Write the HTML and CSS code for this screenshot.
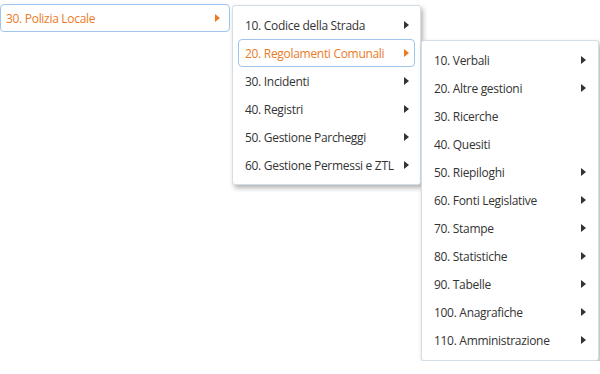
FILE: index.html
```html
<!DOCTYPE html>
<html lang="it">
<head>
    <meta charset="UTF-8">
    <title>Menu Polizia Locale</title>
    <link rel="stylesheet" href="styles.css">
</head>
<body>
    <div class="menubar">
        <ul class="menu menu-root">
            <li class="item active"><span>30. Polizia Locale</span><i class="arrow"></i></li>
        </ul>
        <ul class="menu panel panel-2">
            <li class="item"><span>10. Codice della Strada</span><i class="arrow"></i></li>
            <li class="item active"><span>20. Regolamenti Comunali</span><i class="arrow"></i></li>
            <li class="item"><span>30. Incidenti</span><i class="arrow"></i></li>
            <li class="item"><span>40. Registri</span><i class="arrow"></i></li>
            <li class="item"><span>50. Gestione Parcheggi</span><i class="arrow"></i></li>
            <li class="item"><span>60. Gestione Permessi e ZTL</span><i class="arrow"></i></li>
        </ul>
        <ul class="menu panel panel-3">
            <li class="item"><span>10. Verbali</span><i class="arrow"></i></li>
            <li class="item"><span>20. Altre gestioni</span><i class="arrow"></i></li>
            <li class="item"><span>30. Ricerche</span></li>
            <li class="item"><span>40. Quesiti</span></li>
            <li class="item"><span>50. Riepiloghi</span><i class="arrow"></i></li>
            <li class="item"><span>60. Fonti Legislative</span><i class="arrow"></i></li>
            <li class="item"><span>70. Stampe</span><i class="arrow"></i></li>
            <li class="item"><span>80. Statistiche</span><i class="arrow"></i></li>
            <li class="item"><span>90. Tabelle</span><i class="arrow"></i></li>
            <li class="item"><span>100. Anagrafiche</span><i class="arrow"></i></li>
            <li class="item"><span>110. Amministrazione</span><i class="arrow"></i></li>
        </ul>
    </div>
</body>
</html>
```

FILE: styles.css
```css
:root {
    --text-color: #333333;
    --active-color: #ec7a25;
    --active-border: #9fc6ea;
    --panel-border: #d3dde6;
}
body {
    margin: 0;
    background: #ffffff;
    font-family: "Open Sans", Arial, sans-serif;
    font-size: 12px;
    letter-spacing: -0.3px;
    color: var(--text-color);
}
.menubar {
    display: flex;
    align-items: flex-start;
}
.menu {
    list-style: none;
    margin: 0;
    padding: 0;
}
.item {
    display: flex;
    align-items: center;
    justify-content: space-between;
    height: 26px;
    padding: 0 8px 0 5px;
    border: 1px solid transparent;
    border-radius: 4px;
    white-space: nowrap;
}
.item.active {
    color: var(--active-color);
    border-color: var(--active-border);
}
.arrow {
    flex-shrink: 0;
    width: 0;
    height: 0;
    border-top: 4px solid transparent;
    border-bottom: 4px solid transparent;
    border-left: 5px solid var(--text-color);
}
.item.active .arrow {
    border-left-color: var(--active-color);
}
.menu-root {
    width: 230px;
    margin-top: 4px;
}
.menu-root .item {
    padding-right: 9px;
}
.panel {
    background: #ffffff;
    border: 1px solid var(--panel-border);
    border-radius: 3px;
    box-shadow: 2px 3px 5px rgba(0, 0, 0, 0.3);
}
.panel-2 {
    width: 177px;
    margin: 5px 0 0 2px;
    padding: 5px 5px 5px 5px;
}
.panel-2 .item {
    padding-left: 6px;
    padding-right: 5px;
}
.panel-3 {
    width: 166px;
    margin: 40px 0 0 0;
    padding: 5px 5px 6px 5px;
}
.panel-3 .item {
    padding-left: 6px;
    padding-right: 6px;
}
```
